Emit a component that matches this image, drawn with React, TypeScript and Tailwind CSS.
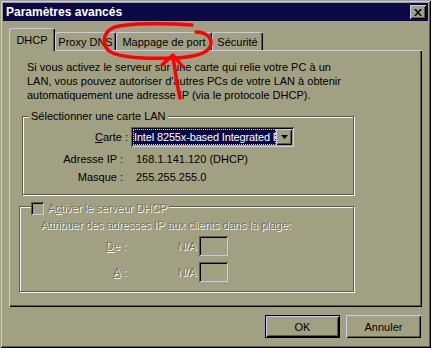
import React from "react";

const raised =
  "shadow-[inset_1px_1px_0_#c8c8f4,inset_-1px_-1px_0_#000,inset_2px_2px_0_#a1a083,inset_-2px_-2px_0_#5e5d4b]";
const sunken =
  "shadow-[inset_1px_1px_0_#5e5d4b,inset_-1px_-1px_0_#c8c8f4,inset_2px_2px_0_#000,inset_-2px_-2px_0_#a1a083]";
const etched =
  "border border-[#5e5d4b] shadow-[inset_1px_1px_0_#f4f4f8,1px_1px_0_#f4f4f8]";
const disabled = "text-[#75745e] [text-shadow:1px_1px_0_#fafafa]";

function Tab({ label, w, selected }: { label: string; w: string; selected?: boolean }) {
  return (
    <div
      className={
        (selected
          ? "h-[23px] -mb-[1px] relative z-10 pt-[2px] "
          : "h-[18px] ") +
        w +
        " bg-[#a1a083] flex items-center justify-center rounded-t-[3px] border-t border-l border-r border-t-[#c8c8f4] border-l-[#c8c8f4] border-r-[#000] shadow-[inset_-1px_0_0_#5e5d4b]"
      }
    >
      <span className={selected ? "-mt-[3px]" : ""}>{label}</span>
    </div>
  );
}

export default function App() {
  return (
    <div className="relative w-[431px] h-[348px] bg-[#a1a083] p-[3px] flex flex-col text-[11px] leading-[14px] text-black font-['Liberation_Sans',Arial,sans-serif] shadow-[inset_1px_1px_0_#a1a083,inset_-1px_-1px_0_#000,inset_2px_2px_0_#c8c8f4,inset_-2px_-2px_0_#5e5d4b]">
      {/* Title bar */}
      <div className="h-[18px] bg-[#0a0a46] flex items-center justify-between pl-[3px] pr-[2px]">
        <span className="text-white font-bold text-[12px] leading-[18px]">Paramètres avancés</span>
        <div className={"w-[16px] h-[14px] bg-[#a1a083] flex items-center justify-center " + raised}>
          <svg width="8" height="7" viewBox="0 0 8 7">
            <path d="M0 0h2l2 2.5L6 0h2L5 3.5 8 7H6L4 4.5 2 7H0l3-3.5z" fill="#000" />
          </svg>
        </div>
      </div>

      <div className="flex-1 flex flex-col px-[6px]">
        {/* Tabs */}
        <div className="mt-[7px] h-[22px] flex items-end">
          <Tab label="DHCP" w="w-[46px]" selected />
          <Tab label="Proxy DNS" w="w-[61px]" />
          <Tab label="Mappage de port" w="w-[96px]" />
          <Tab label="Sécurité" w="w-[51px]" />
        </div>

        {/* Panel */}
        <div className="w-[413px] h-[257px] bg-[#a1a083] flex flex-col shadow-[inset_1px_1px_0_#c8c8f4,inset_-1px_-1px_0_#000,inset_-2px_-2px_0_#5e5d4b]">
          <p className="mt-[10px] ml-[18px] whitespace-nowrap">
            Si vous activez le serveur sur une carte qui relie votre PC à un
            <br />
            LAN, vous pouvez autoriser d'autres PCs de votre LAN à obtenir
            <br />
            automatiquement une adresse IP (via le protocole DHCP).
          </p>

          {/* Group 1 */}
          <div className={"relative mt-[14px] ml-[13px] w-[332px] h-[79px] flex flex-col " + etched}>
            <span className="absolute -top-[8px] left-[6px] px-[2px] bg-[#a1a083]">
              Sélectionner une carte LAN
            </span>
            <div className="mt-[10px] h-[20px] flex items-center">
              <span className="w-[105px] text-right">
                <span className="underline">C</span>arte :
              </span>
              <div className={"ml-[3px] w-[163px] h-[20px] p-[2px] flex bg-white " + sunken}>
                <div className="flex-1 min-w-0 bg-[#0a0a46] text-white overflow-hidden whitespace-nowrap pl-[1px] tracking-[-0.15px] outline outline-1 outline-dotted outline-[#d8d890] -outline-offset-1 leading-[16px]">
                  Intel 8255x-based Integrated F
                </div>
                <div className={"w-[16px] h-[16px] shrink-0 bg-[#a1a083] flex items-center justify-center " + raised}>
                  <svg width="7" height="4" viewBox="0 0 7 4">
                    <path d="M0 0h7L3.5 4z" fill="#000" />
                  </svg>
                </div>
              </div>
            </div>
            <div className="mt-[5px] flex">
              <span className="w-[100px] text-right">Adresse IP :</span>
              <span className="ml-[13px]">168.1.141.120 (DHCP)</span>
            </div>
            <div className="mt-[4px] flex">
              <span className="w-[100px] text-right">Masque :</span>
              <span className="ml-[13px]">255.255.255.0</span>
            </div>
          </div>

          {/* Group 2 */}
          <div className={"relative mt-[11px] ml-[10px] w-[335px] h-[86px] flex flex-col " + etched}>
            <div className="absolute -top-[6px] left-[11px] pr-[2px] flex items-center bg-[#a1a083]">
              <div className={"w-[13px] h-[13px] bg-[#a1a083] " + sunken} />
              <span className={"ml-[4px] " + disabled}>
                A<span className="underline">c</span>tiver le serveur DHCP
              </span>
            </div>
            <div className={"mt-[11px] ml-[21px] whitespace-nowrap " + disabled}>
              Attribuer des adresses IP aux clients dans la plage:
            </div>
            <div className="mt-[4px] h-[20px] flex items-center">
              <span className={"w-[106px] text-right " + disabled}>
                <span className="underline">D</span>e :
              </span>
              <span className={"w-[70px] text-right " + disabled}>N/A</span>
              <div className={"ml-[3px] w-[29px] h-[20px] bg-[#a1a083] " + sunken} />
            </div>
            <div className="mt-[6px] h-[20px] flex items-center">
              <span className={"w-[106px] text-right " + disabled}>
                <span className="underline">A</span> :
              </span>
              <span className={"w-[70px] text-right " + disabled}>N/A</span>
              <div className={"ml-[3px] w-[29px] h-[20px] bg-[#a1a083] " + sunken} />
            </div>
          </div>
        </div>

        {/* Buttons */}
        <div className="mt-[8px] flex justify-end gap-[6px] pr-[1px]">
          <div className="w-[75px] h-[23px] border border-black">
            <div className={"w-full h-full flex items-center justify-center " + raised}>OK</div>
          </div>
          <div className={"w-[75px] h-[23px] flex items-center justify-center " + raised}>Annuler</div>
        </div>
      </div>

      {/* Red annotation */}
      <svg className="absolute inset-0 pointer-events-none" width="431" height="348" viewBox="0 0 431 348">
        <g fill="none" stroke="#f00" strokeWidth="3.5" strokeLinecap="round" strokeLinejoin="round">
          <path d="M192 25 C165 23 130 23 115 27 C104 31 101 42 108 50 C116 58 145 59 175 58 C195 57 210 53 211 44 C212 37 205 32 196 32" />
          <path d="M173 57 C175 70 177 85 180 98" />
          <path d="M162 65 L173 55 L183 67" />
        </g>
      </svg>
    </div>
  );
}
